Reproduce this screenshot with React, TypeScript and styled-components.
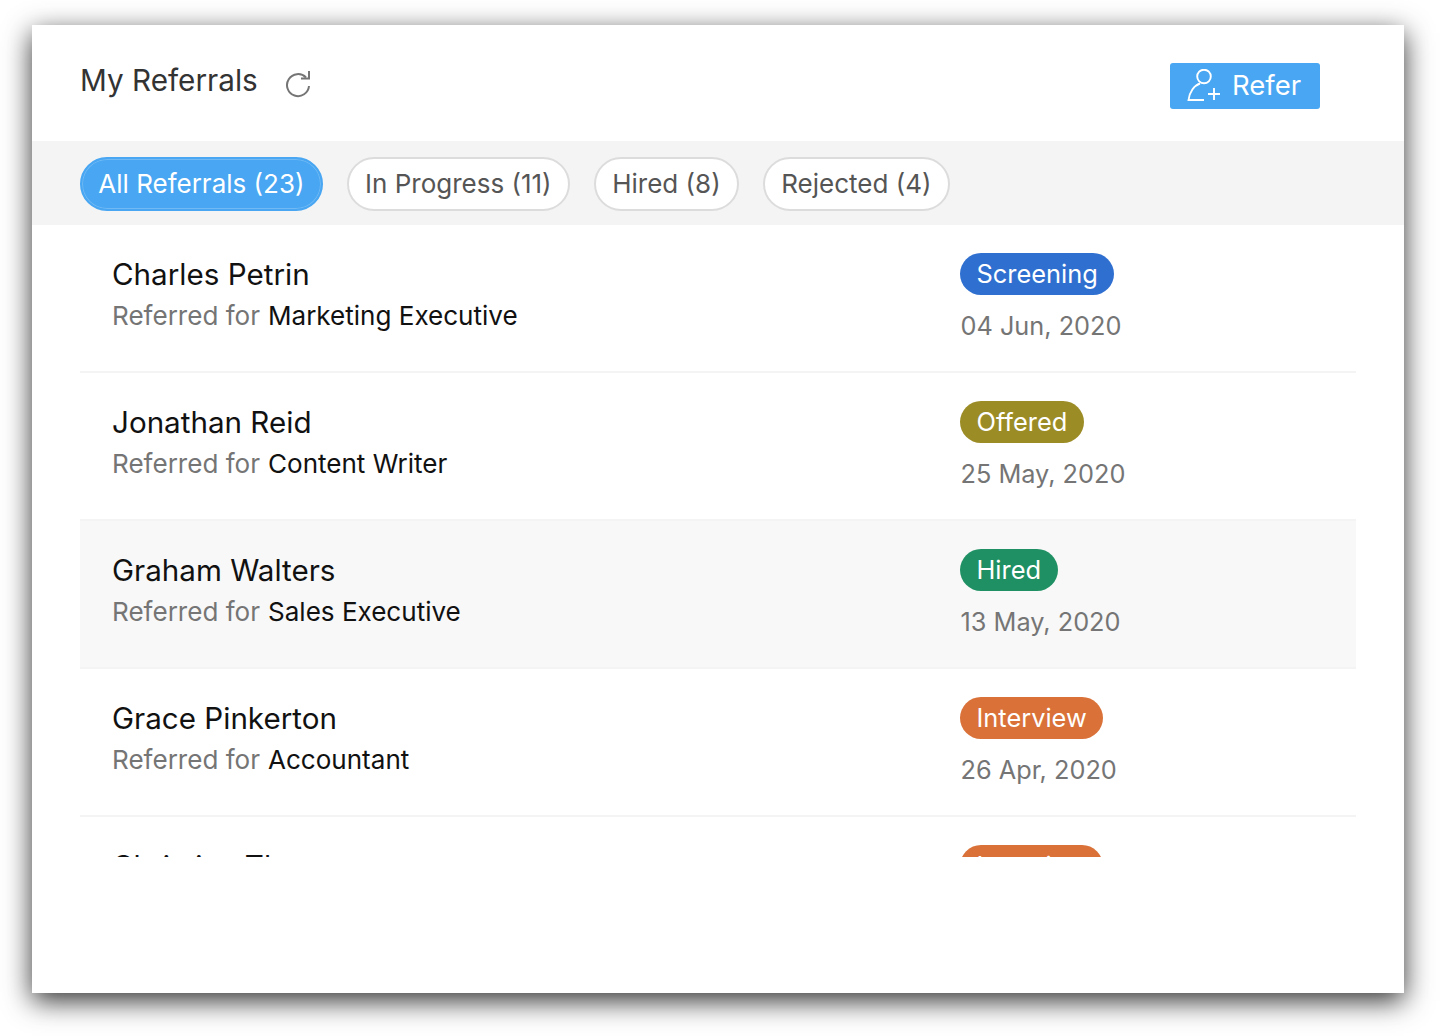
import React from 'react';
import styled, { createGlobalStyle } from 'styled-components';

const Global = createGlobalStyle`
  html, body { margin: 0; padding: 0; background: #fff; }
  body { font-family: Inter, "Liberation Sans", sans-serif; }
`;

const Page = styled.div`
  width: 1440px;
  height: 1036px;
  padding: 25px 36px 43px 32px;
  box-sizing: border-box;
  overflow: hidden;
`;

const Card = styled.main`
  height: 968px;
  background: #fff;
  box-shadow: 0 8px 26px rgba(0, 0, 0, 0.8);
`;

const Header = styled.header`
  height: 116px;
  box-sizing: border-box;
  padding: 37px 84px 0 48px;
  display: flex;
  align-items: flex-start;
`;

const Title = styled.h1`
  margin: 0;
  font-size: 29.7px;
  line-height: 36px;
  font-weight: 400;
  color: #333;
  letter-spacing: 0;
`;

const RefreshButton = styled.span`
  display: flex;
  margin: 8px 0 0 28px;
  color: #757575;
`;

const ReferButton = styled.button`
  margin: 1px 0 0 auto;
  width: 150px;
  height: 46px;
  border: 0;
  border-radius: 3px;
  background: #48a6f2;
  color: #fff;
  font: 400 27.5px/46px Inter, "Liberation Sans", sans-serif;
  padding: 0 0 0 17px;
  display: flex;
  align-items: center;
  gap: 11px;
`;

const ReferLabel = styled.span`
  margin-top: -2px;
`;

const Tabs = styled.nav`
  height: 84px;
  box-sizing: border-box;
  background: #f4f4f4;
  padding: 16px 48px;
  display: flex;
  gap: 24px;
`;

const Tab = styled.div<{ $active?: boolean }>`
  height: 54px;
  box-sizing: border-box;
  padding: 0 16.3px;
  border-radius: 27px;
  border: 2px solid ${p => (p.$active ? '#48a6f2' : '#dcdcdc')};
  background: ${p => (p.$active ? '#48a6f2' : '#fff')};
  box-shadow: ${p => (p.$active ? 'inset 0 0 0 1px rgba(255, 255, 255, 0.22)' : 'none')};
  color: ${p => (p.$active ? '#fff' : '#555')};
  font-size: 26px;
  line-height: 50px;
  white-space: nowrap;
`;

const List = styled.section`
  height: 632px;
  margin: 0 48px;
  overflow: hidden;
  position: relative;
`;

const Row = styled.article<{ $highlight?: boolean }>`
  height: 148px;
  box-sizing: border-box;
  padding: 28px 0 0 32px;
  display: flex;
  border-bottom: 2px solid #f4f4f4;
  background: ${p => (p.$highlight ? '#f8f8f8' : '#fff')};
`;

const Person = styled.div`
  width: 848px;
  flex: none;
`;

const Name = styled.div`
  font-size: 29.6px;
  line-height: 42px;
  margin-bottom: 1px;
  color: #111;
`;

const Role = styled.div`
  font-size: 26.05px;
  line-height: 40px;
  color: #757575;
  white-space: nowrap;
`;

const RoleName = styled.span`
  color: #111;
  margin-left: 8px;
`;

const Meta = styled.div`
  display: flex;
  flex-direction: column;
  align-items: flex-start;
`;

const Badge = styled.span<{ $color: string }>`
  height: 42px;
  padding: 0 16.5px;
  border-radius: 21px;
  background: ${p => p.$color};
  color: #fff;
  font-size: 25.4px;
  line-height: 42px;
`;

const DateText = styled.div`
  margin: 10px 0 0 0.5px;
  font-size: 25.3px;
  line-height: 42px;
  color: #757575;
`;

const rows = [
  { name: 'Charles Petrin', role: 'Marketing Executive', status: 'Screening', color: '#2f6fd0', date: '04 Jun, 2020' },
  { name: 'Jonathan Reid', role: 'Content Writer', status: 'Offered', color: '#9c8c26', date: '25 May, 2020' },
  { name: 'Graham Walters', role: 'Sales Executive', status: 'Hired', color: '#1f9063', date: '13 May, 2020', highlight: true },
  { name: 'Grace Pinkerton', role: 'Accountant', status: 'Interview', color: '#d97138', date: '26 Apr, 2020' },
  { name: 'Christian Thomas', role: 'Sales Executive', status: 'Interview', color: '#d97138', date: '20 Apr, 2020' },
];

export default function App() {
  return (
    <Page>
      <Global />
      <Card>
        <Header>
          <Title>My Referrals</Title>
          <RefreshButton>
            <svg width="26" height="28" viewBox="0 0 26 28" fill="none" stroke="currentColor" strokeWidth="2">
              <path d="M20 7.5A11 11 0 1 0 23 16" />
              <path d="M15 8.5H23V1" />
            </svg>
          </RefreshButton>
          <ReferButton>
            <svg width="34" height="34" viewBox="0 0 34 34" fill="none" stroke="#fff" strokeWidth="1.9">
              <circle cx="17" cy="7.5" r="6.8" />
              <path d="M13 14.5C7 16.5 2.5 23 1.5 31H17" />
              <path d="M21 25H33M27 19V31" />
            </svg>
            <ReferLabel>Refer</ReferLabel>
          </ReferButton>
        </Header>
        <Tabs>
          <Tab $active>All Referrals (23)</Tab>
          <Tab>In Progress (11)</Tab>
          <Tab>Hired (8)</Tab>
          <Tab>Rejected (4)</Tab>
        </Tabs>
        <List>
          {rows.map(r => (
            <Row key={r.name} $highlight={r.highlight}>
              <Person>
                <Name>{r.name}</Name>
                <Role>Referred for<RoleName>{r.role}</RoleName></Role>
              </Person>
              <Meta>
                <Badge $color={r.color}>{r.status}</Badge>
                <DateText>{r.date}</DateText>
              </Meta>
            </Row>
          ))}
        </List>
      </Card>
    </Page>
  );
}
